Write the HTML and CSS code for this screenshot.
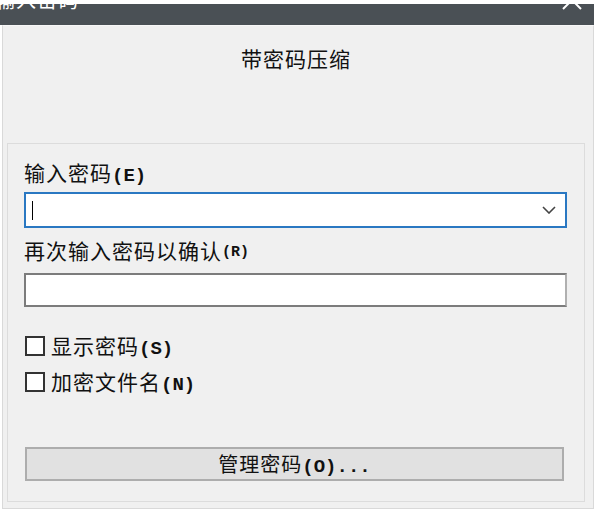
FILE: index.html
```html
<!DOCTYPE html>
<html lang="zh-CN">
<head>
  <meta charset="UTF-8">
  <title>输入密码</title>
  <link rel="stylesheet" href="styles.css">
</head>
<body>

  <div class="window">
    <div class="titlebar">
      <span class="title">输入密码</span>
      <svg class="close" width="22" height="22" viewBox="0 0 22 22">
        <path d="M2 2 L20 20 M20 2 L2 20" stroke="#fff" stroke-width="2" fill="none"/>
      </svg>
    </div>

    <div class="dialog">
      <div class="heading">带密码压缩</div>

      <div class="group">
        <div class="label">输入密码<span class="key">(E)</span></div>
        <div class="field focused">
          <span class="caret"></span>
          <svg class="chevron" width="14" height="8" viewBox="0 0 14 8">
            <path d="M1 1 L7 7 L13 1" stroke="#444" stroke-width="1.6" fill="none"/>
          </svg>
        </div>

        <div class="label second">再次输入密码以确认<span class="key small">(R)</span></div>
        <div class="field plain"></div>

        <div class="check first">
          <span class="box"></span>
          <span>显示密码<span class="key">(S)</span></span>
        </div>
        <div class="check">
          <span class="box"></span>
          <span>加密文件名<span class="key">(N)</span></span>
        </div>

        <button class="manage-btn">管理密码<span class="key">(O)...</span></button>
      </div>
    </div>
  </div>

</body>
</html>
```

FILE: styles.css
```css
* {
  margin: 0;
  padding: 0;
  box-sizing: border-box;
}

body {
  background: #fff;
  color: #111;
  font-family: "Noto Sans CJK SC", "Noto Sans", sans-serif;
  width: 600px;
  overflow: hidden;
}

.window {
  width: 594px;
  padding-top: 4px;
}

.titlebar {
  height: 21px;
  background: #4a5055;
  display: flex;
  justify-content: space-between;
  align-items: flex-start;
  overflow: hidden;
}

.title {
  color: #fff;
  font-size: 20px;
  line-height: 24px;
  margin-top: -16px;
  margin-left: -5px;
  letter-spacing: 1px;
}

.close {
  margin-top: -15px;
  margin-right: 11px;
}

.dialog {
  margin-left: 2px;
  width: 592px;
  background: #f0f0f0;
  border: 1px solid #d9d9d9;
  border-top: 1px solid #f7f7f7;
  padding: 18px 0 6px;
}

.heading {
  text-align: center;
  font-size: 21px;
  line-height: 28px;
  letter-spacing: 1px;
  padding-right: 4px;
}

.group {
  margin: 71px 0 0 4px;
  width: 578px;
  border: 1px solid #dcdcdc;
  padding: 16px 17px 20px 16px;
}

.label {
  height: 24px;
  font-size: 21px;
  line-height: 24px;
  letter-spacing: 1px;
}

.label.second {
  margin-top: 10px;
}

.key {
  font-family: "Liberation Mono", monospace;
  font-weight: bold;
  font-size: 19px;
  line-height: 1;
  letter-spacing: 0;
}

.key.small {
  font-size: 15px;
  vertical-align: 3px;
}

.field {
  width: 543px;
  background: #fff;
  display: flex;
  align-items: center;
  justify-content: space-between;
}

.field.focused {
  margin-top: 8px;
  height: 36px;
  border: 2px solid #2a78c2;
  padding: 0 9px 0 6px;
}

.field.plain {
  margin-top: 11px;
  height: 34px;
  border: 2px solid #7c7c7c;
  border-right-color: #b0b0b0;
}

.caret {
  width: 1px;
  height: 19px;
  background: #000;
}

.check {
  display: flex;
  align-items: center;
  gap: 6px;
  height: 24px;
  font-size: 21px;
  line-height: 24px;
  letter-spacing: 1px;
  margin-top: 12px;
  padding-left: 1px;
}

.check.first {
  margin-top: 27px;
}

.box {
  width: 20px;
  height: 20px;
  border: 2px solid #333;
  background: #fff;
}

.manage-btn {
  display: block;
  margin: 53px 0 0 1px;
  width: 539px;
  height: 34px;
  background: #e1e1e1;
  border: 2px solid #adadad;
  color: #111;
  font-family: "Noto Sans CJK SC", "Noto Sans", sans-serif;
  font-size: 20px;
  line-height: 28px;
  letter-spacing: 1px;
}
```
